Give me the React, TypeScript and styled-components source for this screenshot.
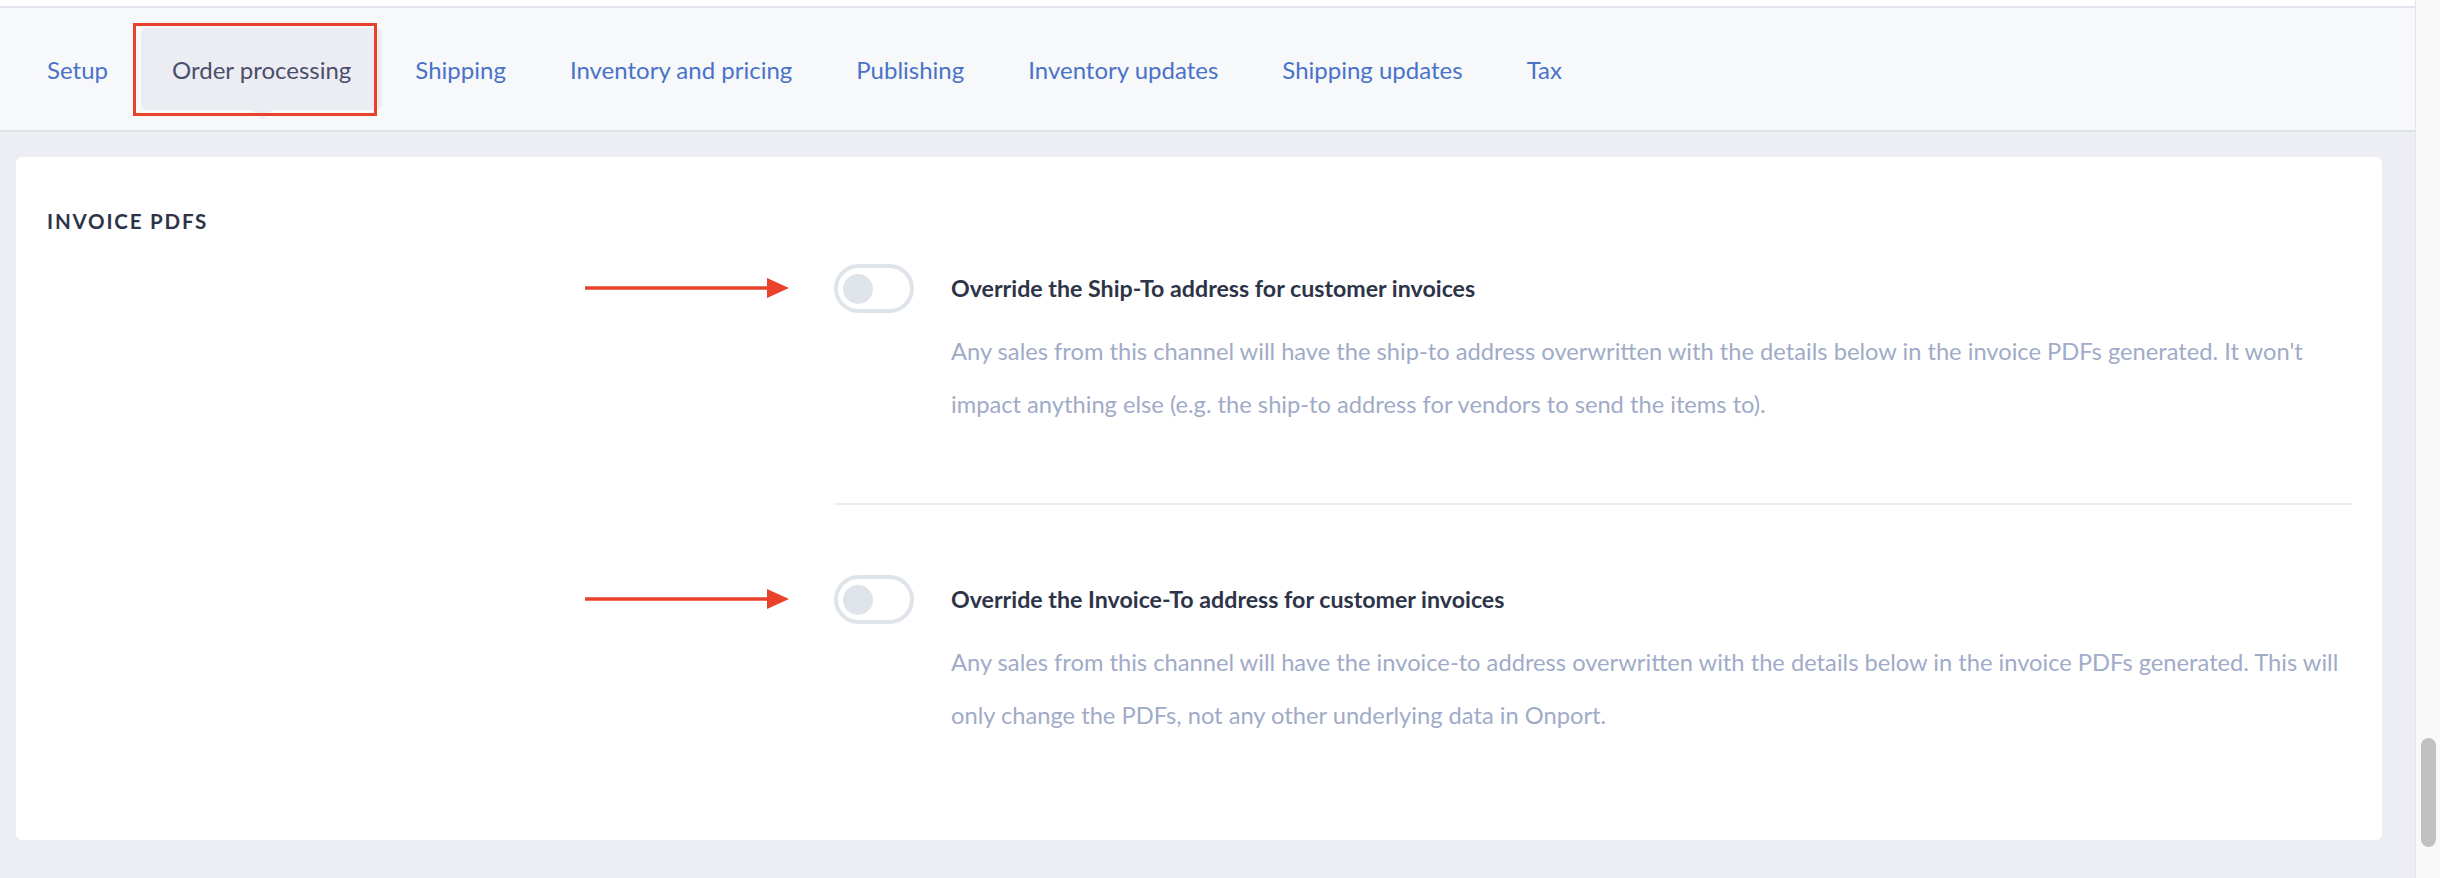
import styled, { createGlobalStyle } from "styled-components";

const GlobalStyle = createGlobalStyle`
  html, body {
    margin: 0;
    padding: 0;
    background: #ffffff;
    font-family: Lato, "Open Sans", sans-serif;
  }
`;

const tabs = [
  "Setup",
  "Order processing",
  "Shipping",
  "Inventory and pricing",
  "Publishing",
  "Inventory updates",
  "Shipping updates",
  "Tax",
];

const settings = [
  {
    title: "Override the Ship-To address for customer invoices",
    text: "Any sales from this channel will have the ship-to address overwritten with the details below in the invoice PDFs generated. It won't impact anything else (e.g. the ship-to address for vendors to send the items to).",
  },
  {
    title: "Override the Invoice-To address for customer invoices",
    text: "Any sales from this channel will have the invoice-to address overwritten with the details below in the invoice PDFs generated. This will only change the PDFs, not any other underlying data in Onport.",
  },
];

export default function App() {
  return (
    <>
      <GlobalStyle />
      <Window>
        <Main>
          <TopStrip />
          <TabBar>
            {tabs.map((t) => (
              <Tab key={t} $active={t === "Order processing"}>
                {t}
              </Tab>
            ))}
          </TabBar>
          <Content>
            <Card>
              <SectionTitle>Invoice PDFs</SectionTitle>
              <Settings>
                {settings.map((s, i) => (
                  <Setting key={s.title} $first={i === 0}>
                    <ToggleWrap>
                      <Arrow viewBox="0 0 204 24">
                        <line x1="0" y1="12" x2="184" y2="12" stroke="#e8432a" strokeWidth="3.5" />
                        <polygon points="182,2 204,12 182,22" fill="#e8432a" />
                      </Arrow>
                      <Toggle>
                        <Knob />
                      </Toggle>
                    </ToggleWrap>
                    <SettingText>
                      <SettingTitle>{s.title}</SettingTitle>
                      <SettingDesc>{s.text}</SettingDesc>
                    </SettingText>
                  </Setting>
                ))}
              </Settings>
            </Card>
          </Content>
        </Main>
        <ScrollTrack>
          <ScrollThumb />
        </ScrollTrack>
      </Window>
    </>
  );
}

const Window = styled.div`
  display: flex;
  width: 2440px;
  height: 878px;
  overflow: hidden;
`;

const Main = styled.div`
  flex: 1;
  display: flex;
  flex-direction: column;
  min-width: 0;
`;

const TopStrip = styled.div`
  height: 6px;
  background: #ffffff;
  border-bottom: 2px solid #e1e4ea;
`;

const TabBar = styled.nav`
  height: 122px;
  display: flex;
  align-items: center;
  gap: 2px;
  padding: 0 16px;
  background: #f7f8fa;
  border-bottom: 2px solid #dde2e8;
`;

const Tab = styled.div<{ $active?: boolean }>`
  position: relative;
  height: 82px;
  display: flex;
  align-items: center;
  padding: 0 31px;
  border-radius: 6px;
  font-size: 24px;
  color: ${(p) => (p.$active ? "#4b4e6d" : "#4a72c9")};
  background: ${(p) => (p.$active ? "#ecedf2" : "transparent")};
  white-space: nowrap;

  ${(p) =>
    p.$active &&
    `
    &::before {
      content: "";
      position: absolute;
      left: 50%;
      bottom: -10px;
      margin-left: -10px;
      border-left: 10px solid transparent;
      border-right: 10px solid transparent;
      border-top: 10px solid #ecedf2;
    }
    &::after {
      content: "";
      position: absolute;
      left: -8px;
      top: -5px;
      width: calc(100% - 3px);
      height: 87px;
      border: 3.5px solid #e8432a;
    }
  `}
`;

const Content = styled.div`
  flex: 1;
  background: #eceef3;
  padding: 25px 33px 0 16px;
`;

const Card = styled.div`
  height: 683px;
  box-sizing: border-box;
  background: #ffffff;
  border-radius: 6px;
  padding: 52px 29px 0 31px;
  display: grid;
  grid-template-columns: 787px 1fr;
  align-items: start;
`;

const SectionTitle = styled.h2`
  margin: 0;
  font-size: 20.5px;
  line-height: 24px;
  font-weight: 700;
  letter-spacing: 1.8px;
  text-transform: uppercase;
  color: #2e3448;
`;

const Settings = styled.div`
  padding-top: 55px;
  display: flex;
  flex-direction: column;
`;

const Setting = styled.div<{ $first?: boolean }>`
  display: flex;
  align-items: flex-start;
  gap: 37px;
  padding: ${(p) => (p.$first ? "0 0 72px" : "70px 0 0")};
  border-bottom: ${(p) => (p.$first ? "2px solid #eceef2" : "none")};
`;

const ToggleWrap = styled.div`
  position: relative;
  flex: none;
`;

const Arrow = styled.svg`
  position: absolute;
  right: calc(100% + 45px);
  top: 12px;
  width: 204px;
  height: 24px;
`;

const Toggle = styled.div`
  width: 80px;
  height: 49px;
  box-sizing: border-box;
  border: 4.5px solid #dfe3ea;
  border-radius: 25px;
  background: #ffffff;
  display: flex;
  align-items: center;
  padding-left: 4.5px;
`;

const Knob = styled.div`
  width: 30px;
  height: 30px;
  border-radius: 50%;
  background: #dfe3ea;
`;

const SettingText = styled.div`
  flex: 1;
  min-width: 0;
`;

const SettingTitle = styled.div`
  font-size: 23.2px;
  line-height: 49px;
  font-weight: 700;
  color: #2e3448;
`;

const SettingDesc = styled.p`
  margin: 12px 0 0;
  font-size: 23.7px;
  line-height: 53px;
  color: #a0abc8;
`;

const ScrollTrack = styled.div`
  width: 25px;
  flex: none;
  background: #f9f9f9;
  border-left: 1px solid #e6e6e6;
  box-sizing: border-box;
  display: flex;
  justify-content: center;
  padding-top: 738px;
`;

const ScrollThumb = styled.div`
  width: 15px;
  height: 109px;
  border-radius: 8px;
  background: #c1c1c1;
`;
